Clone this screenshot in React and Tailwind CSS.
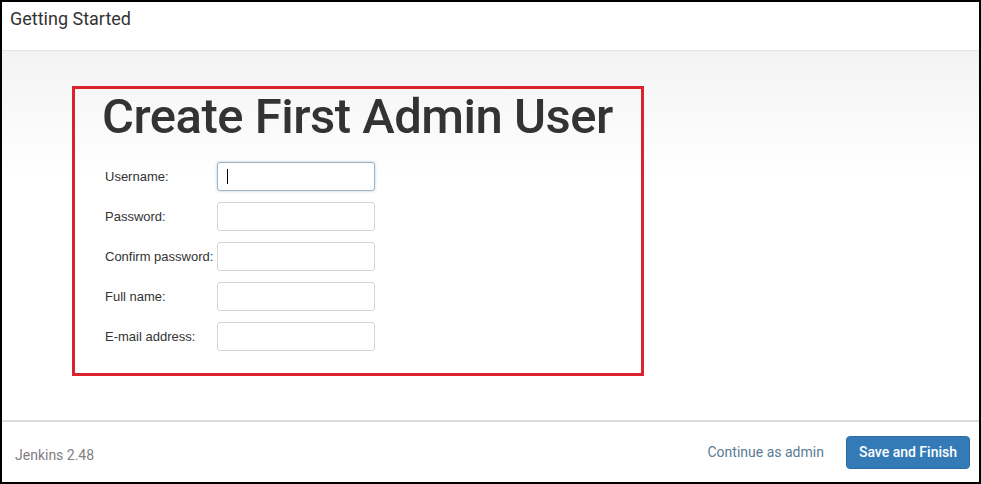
const fields = ['Username:', 'Password:', 'Confirm password:', 'Full name:', 'E-mail address:']

export default function App() {
  return (
    <div className="w-[981px] h-[484px] border-2 border-black bg-white flex flex-col font-['Roboto',sans-serif] text-[#333]">
      {/* Header */}
      <div className="h-[49px] border-b border-[#e3e3e3] pl-[8px] pt-[6px]">
        <h2 className="text-[18px] leading-[22px]">Getting Started</h2>
      </div>

      {/* Content */}
      <div className="flex-1 bg-gradient-to-b from-[#f3f3f3] to-white to-[35%] pl-[70px] pt-[35px]">
        <div className="w-[572px] h-[290px] border-[3px] border-[#d9232d]">
          <h1 className="pl-[27px] pt-[2px] whitespace-nowrap text-[49px] leading-[52px] font-medium text-[#333] tracking-[-0.5px]">
            Create First Admin User
          </h1>
          <div className="mt-[19px] pl-[30px] flex flex-col gap-[11px]">
            {fields.map((label, i) => (
              <div key={label} className="flex items-center">
                <label className="w-[112px] text-[13px] font-['Liberation_Sans',Arial,sans-serif] text-[#333]">
                  {label}
                </label>
                <div
                  className={`w-[158px] h-[29px] rounded-[3px] bg-white flex items-center pl-[9px] ${
                    i === 0 ? 'border border-[#9fb3c4] shadow-[0_0_3px_rgba(102,140,180,0.45)]' : 'border border-[#d4d4d4]'
                  }`}
                >
                  {i === 0 && <span className="w-px h-[15px] bg-black" />}
                </div>
              </div>
            ))}
          </div>
        </div>
      </div>

      {/* Footer */}
      <div className="h-[62px] border-t-2 border-[#dcdcdc] flex items-center justify-between pl-[13px] pr-[9px]">
        <span className="text-[14px] text-[#808080] mt-[6px]">Jenkins 2.48</span>
        <div className="flex items-center gap-[22px]">
          <span className="text-[14px] text-[#5b7a93]">Continue as admin</span>
          <button className="h-[33px] px-[12px] rounded-[4px] bg-[#337ab7] border border-[#2e6da4] text-white text-[14px] font-medium">
            Save and Finish
          </button>
        </div>
      </div>
    </div>
  )
}
